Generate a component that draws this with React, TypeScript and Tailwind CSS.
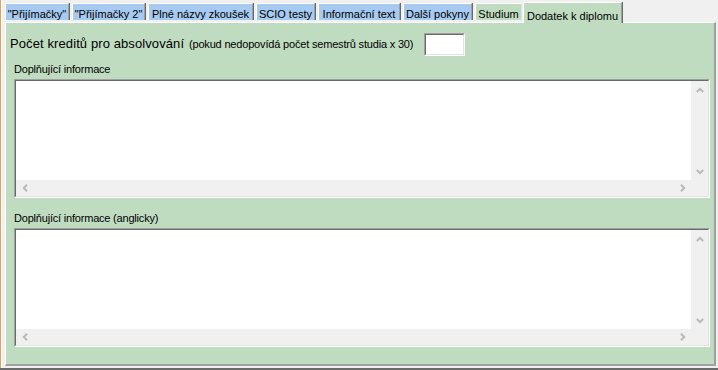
import React from "react";

const tabs = [
  { label: '"Přijímačky"', cls: "w-[64px] mr-[3px] bg-[#a6caf0]" },
  { label: '"Přijímačky 2"', cls: "w-[73px] mr-[3px] bg-[#a6caf0]" },
  { label: "Plné názvy zkoušek", cls: "w-[105px] mr-[3px] bg-[#a6caf0]" },
  { label: "SCIO testy", cls: "w-[59px] mr-[3px] bg-[#a6caf0]" },
  { label: "Informační text", cls: "w-[82px] mr-[3px] bg-[#a6caf0]" },
  { label: "Další pokyny", cls: "w-[69px] mr-[3px] bg-[#a6caf0]" },
];

function Chevron({ dir }: { dir: "up" | "down" | "left" | "right" }) {
  const pts =
    dir === "up"
      ? "0.8,5 4,1.8 7.2,5"
      : dir === "down"
      ? "0.8,1 4,4.2 7.2,1"
      : dir === "left"
      ? "5,0.8 1.8,4 5,7.2"
      : "1,0.8 4.2,4 1,7.2";
  const vertical = dir === "up" || dir === "down";
  return (
    <svg
      width={vertical ? 8 : 6}
      height={vertical ? 6 : 8}
      viewBox={vertical ? "0 0 8 6" : "0 0 6 8"}
    >
      <polyline points={pts} fill="none" stroke="#b9b9b9" strokeWidth="2" />
    </svg>
  );
}

function Memo() {
  return (
    <div className="ml-[8px] w-[696px] h-[119px] border border-t-[#a0a0a0] border-l-[#a0a0a0] border-r-white border-b-white">
      <div className="w-full h-full border border-t-[#696969] border-l-[#696969] border-r-[#e3e3e3] border-b-[#e3e3e3] bg-[#f0f0f0] grid grid-cols-[1fr_17px] grid-rows-[1fr_16px]">
        <div className="bg-white" />
        <div className="flex flex-col justify-between">
          <div className="w-[17px] h-[17px] flex items-center justify-center">
            <Chevron dir="up" />
          </div>
          <div className="w-[17px] h-[17px] flex items-center justify-center">
            <Chevron dir="down" />
          </div>
        </div>
        <div className="flex justify-between">
          <div className="w-[17px] h-[16px] flex items-center justify-center">
            <Chevron dir="left" />
          </div>
          <div className="w-[17px] h-[16px] flex items-center justify-center">
            <Chevron dir="right" />
          </div>
        </div>
        <div />
      </div>
    </div>
  );
}

export default function App() {
  return (
    <div className="w-[718px] h-[370px] bg-[#f0f0f0] font-['Liberation_Sans',Arial,sans-serif] text-black overflow-hidden flex flex-col">
      <div className="h-[368px] flex">
        <div className="w-px bg-[#d9a263]" />
        <div className="w-px bg-white" />
        <div className="flex-1 pl-[3px] flex flex-col">
          {/* tabs */}
          <div className="h-[22px] flex items-start">
            {tabs.map((t) => (
              <div
                key={t.label}
                className={`${t.cls} mt-[3px] h-[17px] border-t border-l border-white border-r border-r-[#a0a0a0] shadow-[1px_0_0_#696969] text-[11px] leading-[12px] pt-[4px] text-center whitespace-nowrap`}
              >
                {t.label}
              </div>
            ))}
            <div className="w-[47px] mr-[1px] bg-[#c0dcc0] mt-[3px] h-[17px] border-t border-l border-white border-r border-r-[#e3e3e3] text-[11px] leading-[12px] pt-[4px] text-center whitespace-nowrap">
              Studium
            </div>
            <div className="relative z-10 w-[99px] bg-[#c0dcc0] mt-[2px] h-[21px] border-t border-l border-white border-r border-r-[#a0a0a0] shadow-[1px_0_0_#696969] text-[11px] leading-[12px] pt-[7px] text-center whitespace-nowrap">
              Dodatek k diplomu
            </div>
          </div>
          {/* panel */}
          <div className="w-[711px] h-[344px] bg-[#c0dcc0] border-t border-l border-white border-r-2 border-b-2 border-r-[#a0a0a0] border-b-[#a0a0a0] flex flex-col">
            <div className="mt-[10px] h-[23px] flex items-center">
              <div className="ml-[4px] w-[179px] mb-[2px] text-[13px] leading-[16px] tracking-[0.1px] whitespace-nowrap font-normal">
                Počet kreditů pro absolvování
              </div>
              <div className="w-[235px] text-[11px] leading-[13px] tracking-[-0.18px] whitespace-nowrap">
                (pokud nedopovídá počet semestrů studia x 30)
              </div>
              <div className="w-[41px] h-[23px] border border-t-[#a0a0a0] border-l-[#a0a0a0] border-r-white border-b-white">
                <div className="w-full h-full bg-white border border-t-[#696969] border-l-[#696969] border-r-[#e3e3e3] border-b-[#e3e3e3]" />
              </div>
            </div>
            <div className="mt-[7px] h-[16px] ml-[8px] text-[11px] leading-[13px] tracking-[-0.2px]">
              Doplňující informace
            </div>
            <Memo />
            <div className="mt-[14px] h-[16px] ml-[8px] text-[11px] leading-[13px] tracking-[-0.2px]">
              Doplňující informace (anglicky)
            </div>
            <Memo />
          </div>
        </div>
      </div>
      <div className="h-[2px] bg-[#6b6b6b]" />
    </div>
  );
}
